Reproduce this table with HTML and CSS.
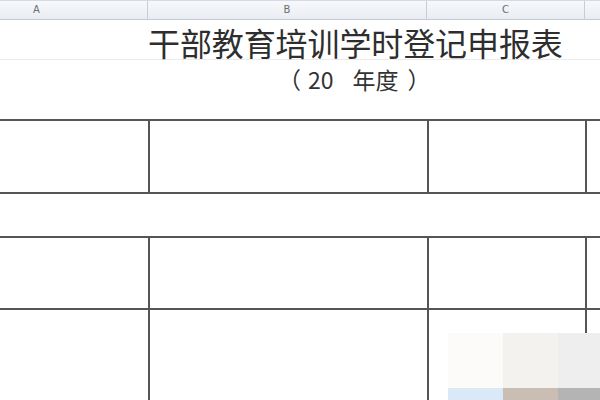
FILE: index.html
```html
<!DOCTYPE html>
<html lang="zh-CN">
<head>
<meta charset="utf-8">
<title>干部教育培训学时登记申报表</title>
<link rel="stylesheet" href="styles.css">
</head>
<body>
<div class="sheet">
  <div class="colhead">
    <div class="ch ch-a">A</div>
    <div class="ch ch-b">B</div>
    <div class="ch ch-c">C</div>
    <div class="ch ch-d"></div>
  </div>
  <div class="title-row">
    <span class="title">干部教育培训学时登记申报表</span>
  </div>
  <div class="sub-row">
    <span class="subtitle"><span class="paren">（</span><span class="year">20</span><span class="unit">年度</span><span class="paren close">）</span></span>
  </div>
  <div class="tbl tbl-1">
    <div class="cell"></div><div class="cell"></div><div class="cell"></div><div class="cell"></div>
  </div>
  <div class="gap-row"></div>
  <div class="tbl tbl-2">
    <div class="cell r1"></div><div class="cell r1"></div><div class="cell r1"></div><div class="cell r1"></div>
    <div class="cell r2"></div><div class="cell r2"></div><div class="cell r2"></div><div class="cell r2"></div>
  </div>
</div>
<div class="noise">
  <div class="px p1"></div><div class="px p2"></div><div class="px p3"></div>
  <div class="px p4"></div><div class="px p5"></div><div class="px p6"></div>
</div>
</body>
</html>
```

FILE: styles.css
```css
html, body {
  margin: 0;
  padding: 0;
  background: #ffffff;
  overflow: hidden;
}

body {
  width: 600px;
  height: 400px;
  position: relative;
  font-family: "Noto Sans CJK SC", "Noto Sans", sans-serif;
}

.sheet {
  display: flex;
  flex-direction: column;
  width: 600px;
}

.colhead {
  display: grid;
  grid-template-columns: 148px 279px 158px 1fr;
  height: 20px;
  box-sizing: border-box;
  border-top: 1px solid #d6dbe2;
  border-bottom: 1px solid #c4cbd5;
  background: linear-gradient(#f7f8fb, #e9edf3);
}

.ch {
  font-family: "DejaVu Sans", sans-serif;
  font-size: 10px;
  line-height: 18px;
  color: #6b6f75;
  text-align: center;
  border-right: 1px solid #c8ced8;
}

.ch-a {
  text-align: left;
  padding-left: 33px;
}

.ch-d {
  border-right: none;
}

.title-row {
  height: 40px;
  box-sizing: border-box;
  padding: 6px 0 0 148px;
  border-bottom: 1px solid #ebebeb;
  white-space: nowrap;
}

.title {
  font-size: 32px;
  line-height: 32px;
  color: #2e2e2e;
  letter-spacing: -0.1px;
}

.sub-row {
  height: 59px;
  box-sizing: border-box;
  padding: 8px 0 0 278px;
  white-space: nowrap;
}

.subtitle {
  font-size: 23px;
  line-height: 23px;
  color: #333333;
}

.year {
  margin-left: 7px;
}

.unit {
  margin-left: 19px;
}

.close {
  margin-left: 9px;
}

.tbl {
  display: grid;
  grid-template-columns: 148px 277px 156px 1fr;
  gap: 2px;
  padding: 2px 0;
  background: #555555;
}

.tbl-1 .cell {
  height: 71px;
}

.tbl-2 {
  padding-bottom: 0;
}

.tbl-2 .r1 {
  height: 70px;
}

.tbl-2 .r2 {
  height: 100px;
}

.cell {
  background: #ffffff;
}

.gap-row {
  height: 42px;
}

.noise {
  position: absolute;
  left: 448px;
  top: 333px;
  width: 152px;
  height: 67px;
  display: grid;
  grid-template-columns: 55px 55px 42px;
  grid-template-rows: 55px 12px;
}

.p1 { background: #fcfbf9; }
.p2 { background: #f3f2ef; }
.p3 { background: #eeeeee; }
.p4 { background: #dae9f7; }
.p5 { background: #cabeb4; }
.p6 { background: #b4b4b4; }
```
